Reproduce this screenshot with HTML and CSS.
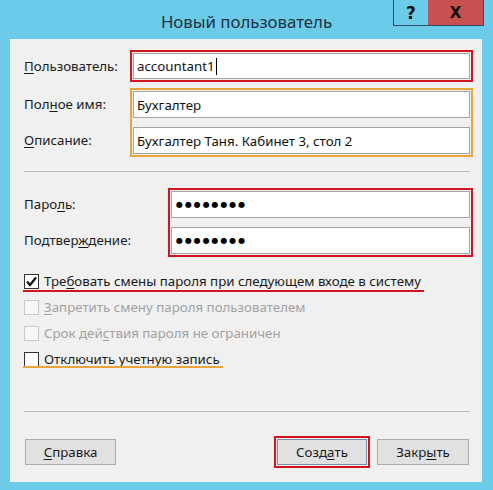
FILE: index.html
```html
<!DOCTYPE html>
<html lang="ru">
<head>
<meta charset="utf-8">
<title>Новый пользователь</title>
<link rel="stylesheet" href="styles.css">
</head>
<body>
<div class="window">
  <div class="titlebar">
    <div class="spacer"></div>
    <div class="title">Новый пользователь</div>
    <div class="caption-btns">
      <div class="cb help">?</div>
      <div class="cb close">X</div>
    </div>
  </div>
  <div class="panel">
    <div class="row-user">
      <div class="lbl"><u>П</u>ользователь:</div>
      <div class="hl red">
        <div class="input">accountant1<span class="caret"></span></div>
      </div>
    </div>

    <div class="group names">
      <div class="labels">
        <div class="lbl">Пол<u>н</u>ое имя:</div>
        <div class="lbl"><u>О</u>писание:</div>
      </div>
      <div class="hl orange stack">
        <div class="input">Бухгалтер</div>
        <div class="input">Бухгалтер Таня. Кабинет 3, стол 2</div>
      </div>
    </div>

    <div class="sep sep1"></div>

    <div class="group passwords">
      <div class="labels">
        <div class="lbl">Паро<u>л</u>ь:</div>
        <div class="lbl">Подтвер<u>ж</u>дение:</div>
      </div>
      <div class="hl red stack">
        <div class="input pw">●●●●●●●●</div>
        <div class="input pw">●●●●●●●●</div>
      </div>
    </div>

    <div class="checks">
      <div class="check mark-red">
        <span class="box"><svg width="13" height="13" viewBox="0 0 13 13"><path d="M2 6.5 L5 10 L11 2.5" fill="none" stroke="#111" stroke-width="2.2"/></svg></span>
        <span class="ctext">Тре<u>б</u>овать смены пароля при следующем входе в систему</span>
      </div>
      <div class="check disabled">
        <span class="box"></span>
        <span class="ctext"><u>З</u>апретить смену пароля пользователем</span>
      </div>
      <div class="check disabled">
        <span class="box"></span>
        <span class="ctext">Срок дей<u>с</u>твия пароля не ограничен</span>
      </div>
      <div class="check mark-orange">
        <span class="box"></span>
        <span class="ctext">От<u>к</u>лючить учетную запись</span>
      </div>
    </div>

    <div class="sep sep2"></div>

    <div class="buttons">
      <div class="btn help-btn"><u>С</u>правка</div>
      <div class="btn-wrap"><div class="btn default">Созд<u>а</u>ть</div></div>
      <div class="btn close-btn">Закр<u>ы</u>ть</div>
    </div>
  </div>
</div>
</body>
</html>
```
FILE: styles.css
```css
* { box-sizing: border-box; }
html, body { margin: 0; padding: 0; }
body {
  width: 493px;
  height: 490px;
  background: #6bcbe9;
  font-family: "Noto Sans", "Open Sans", sans-serif;
  font-size: 13.3px;
  color: #1b1b1b;
  overflow: hidden;
}
u { text-decoration: underline; text-underline-offset: 2px; text-decoration-thickness: 1px; }

.window {
  width: 493px;
  height: 490px;
  display: flex;
  flex-direction: column;
  background: #6bcbe9;
}

.titlebar {
  height: 39px;
  display: grid;
  grid-template-columns: 1fr auto 1fr;
  align-items: start;
}
.title {
  font-size: 16.8px;
  color: #1c3340;
  line-height: 20px;
  padding-top: 12px;
}
.caption-btns {
  justify-self: end;
  display: flex;
  margin-right: 9px;
}
.cb {
  height: 26px;
  display: flex;
  align-items: center;
  justify-content: center;
  font-family: "DejaVu Sans", sans-serif;
  font-weight: bold;
  color: #111;
}
.help {
  width: 35px;
  border: 1px solid #2f4f60;
  border-top: none;
  border-right: none;
  font-size: 17px;
}
.close {
  width: 56px;
  background: #c75050;
  font-size: 15px;
  border-bottom: 1px solid #2f4f60;
  border-right: 1px solid #2f4f60;
}

.panel {
  flex: 1;
  margin: 0 11px 8px 10px;
  background: #f0f0f0;
  padding: 11px 9px 0 14px;
  display: flex;
  flex-direction: column;
}

.lbl { line-height: 27px; height: 27px; white-space: nowrap; }

.row-user {
  display: flex;
  align-items: center;
}
.row-user .lbl { width: 106px; }
.row-user .hl { flex: 1; }

.hl { padding: 1px; border: 2px solid; }
.hl.red { border-color: #d2141e; }
.hl.orange { border-color: #eca33a; }

.input {
  height: 26px;
  background: #fff;
  border: 1px solid #a3a3a3;
  padding: 0 3px;
  line-height: 24px;
  color: #111;
  white-space: nowrap;
  display: flex;
  align-items: center;
}
.stack { display: flex; flex-direction: column; gap: 9px; }
.stack .input { height: 27px; }

.caret {
  display: inline-block;
  width: 1px;
  height: 17px;
  background: #000;
  margin-left: 1px;
}

.group { display: flex; }
.labels {
  display: flex;
  flex-direction: column;
  gap: 9px;
  padding-top: 3px;
}
.names { margin-top: 6px; }
.names .labels { width: 106px; }
.names .hl { flex: 1; }

.sep { height: 1px; background: #bdbdbd; margin-right: 3px; }
.sep1 { margin-top: 14px; }

.passwords { margin-top: 16px; }
.passwords .labels { width: 144px; }
.passwords .hl { flex: 1; }
.pw {
  font-family: "DejaVu Sans", sans-serif;
  font-size: 8px;
  letter-spacing: 1.9px;
  padding-left: 4px;
  color: #000;
}

.checks {
  margin-top: 11px;
  display: flex;
  flex-direction: column;
  align-items: flex-start;
}
.check {
  height: 26px;
  display: flex;
  align-items: center;
  gap: 5px;
  position: relative;
  padding-right: 3px;
}
.box {
  width: 15px;
  height: 15px;
  border: 1px solid #333;
  background: #fff;
  display: flex;
  align-items: center;
  justify-content: center;
}
.disabled { color: #a2a2a2; }
.disabled .box { border-color: #c9c9c9; background: #f7f7f7; }
.mark-red::after, .mark-orange::after {
  content: "";
  position: absolute;
  left: -1px;
  right: 0;
  height: 2px;
}
.mark-red::after { background: #d2141e; bottom: 2px; }
.mark-orange::after { background: #eca33a; bottom: 4px; }

.sep2 { margin-top: 39px; }

.buttons {
  margin-top: 23px;
  height: 33px;
  display: flex;
  align-items: center;
  padding: 0 4px 0 1px;
}
.btn {
  height: 26px;
  border: 1px solid #adadad;
  background: #e1e1e1;
  display: flex;
  align-items: center;
  justify-content: center;
  color: #1b1b1b;
}
.help-btn { width: 91px; }
.btn-wrap {
  margin-left: auto;
  border: 2px solid #d2141e;
  padding: 1px;
}
.btn.default { width: 90px; border-color: #7d8ca8; }
.close-btn { width: 92px; margin-left: 7px; }
```
